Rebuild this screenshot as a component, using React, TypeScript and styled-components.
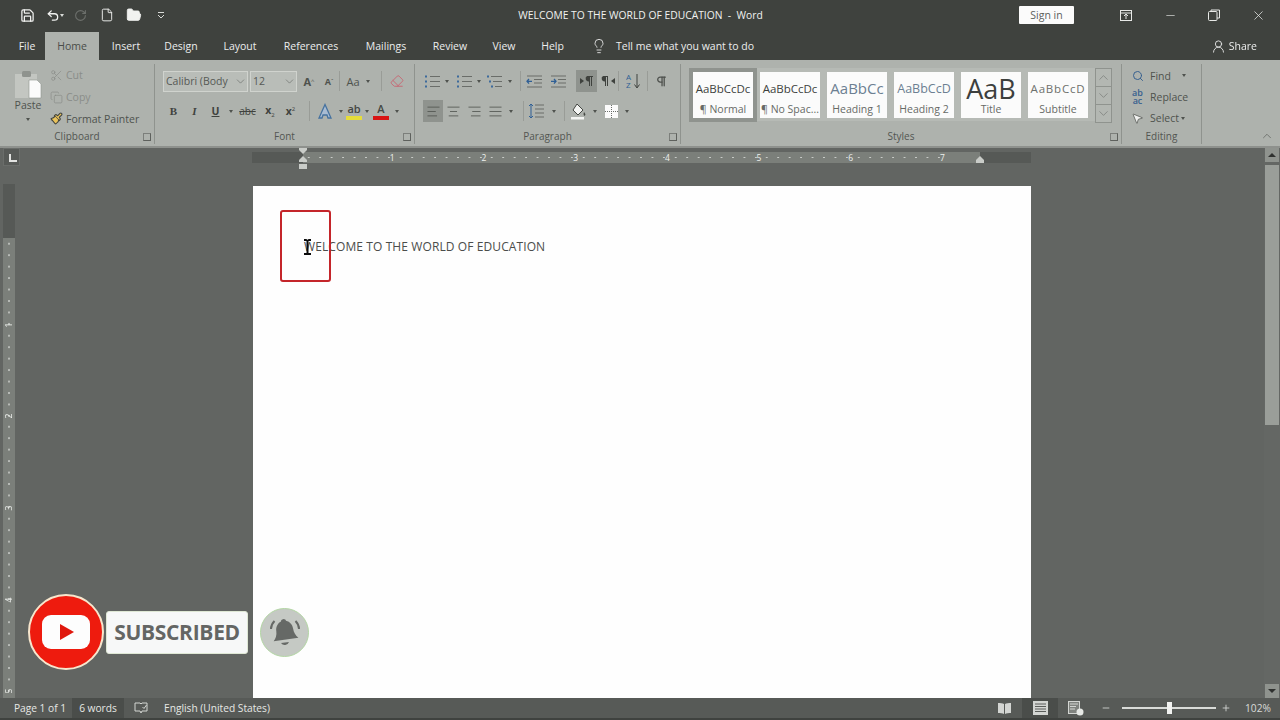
import React from "react";
import styled, { createGlobalStyle } from "styled-components";
import {
  Save,
  Undo2,
  RotateCw,
  File,
  FolderOpen,
  Lightbulb,
  UserRound,
  Scissors,
  Copy,
  Paintbrush,
  AlignLeft,
  AlignCenter,
  AlignRight,
  AlignJustify,
  ChevronDown,
  ChevronUp,
  Minus,
  Plus,
  X,
  Search,
  MousePointer2,
  Pilcrow,
  Eraser,
} from "lucide-react";

const GlobalStyle = createGlobalStyle`
  html, body {
    margin: 0;
    padding: 0;
    background: #626562;
    overflow: hidden;
  }
  * {
    box-sizing: border-box;
  }
`;

const Page = styled.div`
  width: 1280px;
  height: 720px;
  display: flex;
  flex-direction: column;
  position: relative;
  overflow: hidden;
  font-family: "Open Sans", "Noto Sans", sans-serif;
  font-size: 10.5px;
  filter: blur(0.35px);
`;

/* title bar */
const TitleBar = styled.div`
  height: 30px;
  flex: none;
  display: grid;
  grid-template-columns: 1fr 420px 1fr;
  align-items: center;
  background: #3f423e;
  color: #f1f2f0;
`;

const Qat = styled.div`
  display: flex;
  align-items: center;
  padding-left: 20px;
`;

const QatSlot = styled.span<{ $w: number; $dim?: boolean }>`
  width: ${(p) => p.$w}px;
  height: 16px;
  display: flex;
  align-items: center;
  color: ${(p) => (p.$dim ? "#6d706c" : "#f1f2f0")};
`;

const DocTitle = styled.div`
  text-align: center;
  font-size: 10.3px;
  white-space: pre;
  padding-left: 1px;
`;

const WinControls = styled.div`
  display: flex;
  align-items: center;
  justify-content: flex-end;
`;

const SignIn = styled.div`
  width: 55px;
  height: 18px;
  margin-right: 30px;
  background: #fbfbfb;
  color: #5d605c;
  font-size: 10.5px;
  line-height: 18px;
  text-align: center;
  border-radius: 1px;
`;

const WinButton = styled.div<{ $w: number }>`
  width: ${(p) => p.$w}px;
  height: 16px;
  display: flex;
  justify-content: center;
  align-items: center;
  color: #e8e9e7;
`;

/* tabs */
const TabBar = styled.div`
  height: 30px;
  flex: none;
  display: flex;
  align-items: flex-end;
  background: #3f423e;
  padding-left: 9px;
`;

const Tab = styled.div<{ $active?: boolean; $w: number }>`
  width: ${(p) => p.$w}px;
  height: 28px;
  line-height: 28px;
  text-align: center;
  font-size: 10.5px;
  color: ${(p) => (p.$active ? "#4a4d49" : "#eceded")};
  background: ${(p) => (p.$active ? "#aeb2ad" : "transparent")};
`;

const TellMe = styled.div`
  display: flex;
  align-items: center;
  gap: 9px;
  height: 28px;
  margin-left: 15px;
  color: #eceded;
  font-size: 10.5px;
`;

const Share = styled.div`
  margin-left: auto;
  margin-right: 23px;
  height: 28px;
  display: flex;
  align-items: center;
  gap: 3px;
  color: #eceded;
  font-size: 10.5px;
`;

/* ribbon */
const Ribbon = styled.div`
  height: 88px;
  flex: none;
  display: flex;
  background: #aeb2ad;
  color: #4f524e;
  position: relative;
  border-bottom: 2px solid #8e918d;
`;

const Group = styled.div<{ $w: number }>`
  width: ${(p) => p.$w}px;
  flex: none;
  height: 80px;
  margin-top: 4px;
  border-right: 1px solid #8f938e;
  position: relative;
  display: flex;
  flex-direction: column;
`;

const GroupBody = styled.div`
  flex: 1;
  min-height: 0;
`;

const GroupLabel = styled.div`
  height: 16px;
  line-height: 16px;
  text-align: center;
  font-size: 10px;
  color: #535652;
`;

const Launcher = styled.span`
  position: absolute;
  right: 3px;
  bottom: 3px;
  width: 8px;
  height: 8px;
  border: 1px solid #7c7f7b;
  border-right-color: #5e615d;
  border-bottom-color: #5e615d;
`;

const ClipboardBody = styled(GroupBody)`
  display: flex;
  padding-left: 12px;
`;

const PasteButton = styled.div`
  width: 32px;
  display: flex;
  flex-direction: column;
  align-items: center;
  font-size: 10.5px;
  color: #4f524e;
  padding-top: 5px;
  line-height: 13px;
`;

const ClipList = styled.div`
  margin-left: 6px;
  padding-top: 2px;
  display: flex;
  flex-direction: column;
  gap: 3px;
`;

const ClipItem = styled.div<{ $dim?: boolean }>`
  height: 19px;
  display: flex;
  align-items: center;
  gap: 3px;
  font-size: 10.5px;
  color: ${(p) => (p.$dim ? "#8a8d89" : "#4f524e")};
  white-space: nowrap;
`;

const ToolStack = styled(GroupBody)<{ $left: number }>`
  padding-left: ${(p) => p.$left}px;
  padding-top: 6px;
  display: flex;
  flex-direction: column;
  gap: 8px;
`;

const ToolRow = styled.div`
  height: 22px;
  display: flex;
  align-items: center;
`;

const Combo = styled.div<{ $w: number }>`
  width: ${(p) => p.$w}px;
  height: 21px;
  margin-right: 2px;
  flex: none;
  border: 1px solid #d0d3ce;
  background: #b9bdb8;
  padding-left: 2px;
  display: flex;
  align-items: center;
  justify-content: space-between;
  font-size: 10.5px;
  color: #565955;
  white-space: nowrap;
  overflow: hidden;
`;

const Tool = styled.span<{ $w: number; $active?: boolean }>`
  width: ${(p) => p.$w}px;
  height: 22px;
  flex: none;
  display: flex;
  align-items: center;
  justify-content: center;
  color: #4f524e;
  font-size: 11px;
  background: ${(p) => (p.$active ? "#8f938e" : "transparent")};
`;

const BoldGlyph = styled.b`
  font-family: "Liberation Serif", serif;
  font-size: 11px;
  color: #3f423e;
`;

const ItalicGlyph = styled.i`
  font-family: "Liberation Serif", serif;
  font-weight: bold;
  font-size: 11px;
  color: #3f423e;
`;

const UnderGlyph = styled.b`
  text-decoration: underline;
  font-size: 10.5px;
  color: #3f423e;
`;

const StrikeGlyph = styled.span`
  text-decoration: line-through;
  font-size: 10px;
  color: #3f423e;
`;

const ScriptGlyph = styled.b`
  font-size: 10.5px;
  color: #3f423e;
  sub,
  sup {
    font-size: 6px;
    font-weight: normal;
  }
`;

const Caret = styled.span`
  width: 0;
  height: 0;
  border-left: 2.5px solid transparent;
  border-right: 2.5px solid transparent;
  border-top: 3px solid #4f524e;
`;

const Divider = styled.span`
  width: 1px;
  height: 20px;
  flex: none;
  background: #999c97;
`;

const ColorGlyph = styled.span<{ $bar: string }>`
  display: block;
  width: 16px;
  height: 17px;
  line-height: 12px;
  text-align: center;
  font-size: 11px;
  font-weight: 600;
  color: #444743;
  border-bottom: 4px solid ${(p) => p.$bar};
`;

/* styles gallery */
const StylesBody = styled(GroupBody)`
  padding: 4px 0 0 9px;
  display: flex;
`;

const Gallery = styled.div`
  height: 53px;
  width: 405px;
  background: #b6bab5;
  padding: 0 0 0 3px;
  display: flex;
  align-items: center;
  gap: 7px;
`;

const StyleCard = styled.div<{ $selected?: boolean }>`
  width: 60px;
  height: 46px;
  flex: none;
  background: #fbfbfb;
  display: flex;
  flex-direction: column;
  align-items: center;
  overflow: hidden;
  outline: ${(p) => (p.$selected ? "4px solid #8f938e" : "none")};
  padding: 3px 1px 0;
`;

const Sample = styled.div<{ $size: number; $color: string; $spacing?: number; $font?: string }>`
  height: 27px;
  line-height: 27px;
  width: 100%;
  overflow: hidden;
  white-space: nowrap;
  text-align: center;
  font-size: ${(p) => p.$size}px;
  color: ${(p) => p.$color};
  letter-spacing: ${(p) => p.$spacing ?? 0}px;
`;

const StyleName = styled.div`
  font-size: 10.5px;
  line-height: 14px;
  color: #676a66;
  white-space: nowrap;
`;

const GalleryScroll = styled.div`
  width: 17px;
  height: 55px;
  display: flex;
  flex-direction: column;
  background: #b3b7b2;
  border: 1px solid #8f938e;
  color: #6f726e;
`;

const ScrollStep = styled.div`
  flex: 1;
  display: flex;
  align-items: center;
  justify-content: center;
  border-bottom: 1px solid #8f938e;
  &:last-child {
    border-bottom: none;
  }
`;

const EditList = styled(GroupBody)`
  padding: 2px 0 0 8px;
  display: flex;
  flex-direction: column;
  gap: 2px;
`;

const EditItem = styled.div`
  height: 20px;
  display: flex;
  align-items: center;
  gap: 5px;
  font-size: 10.5px;
  color: #4f524e;
  white-space: nowrap;
`;

const EditIcon = styled.span`
  width: 15px;
  display: flex;
  justify-content: center;
`;

const ReplaceGlyph = styled.span`
  font-size: 9px;
  line-height: 8px;
  font-weight: 600;
  color: #37608f;
  text-align: center;
`;

const CollapseRibbon = styled.span`
  position: absolute;
  right: 6px;
  bottom: 3px;
  display: flex;
  color: #5a5d59;
`;

/* work area */
const Workspace = styled.div`
  flex: 1;
  min-height: 0;
  display: flex;
  background: #626562;
`;

const CenterColumn = styled.div`
  flex: 1;
  min-width: 0;
  display: flex;
  flex-direction: column;
`;

const RulerRow = styled.div`
  height: 20px;
  flex: none;
  display: flex;
  align-items: flex-start;
  padding: 0 0 0 3px;
`;

const TabStop = styled.div`
  width: 17px;
  height: 18px;
  background: #575a57;
  border: 1px solid #6a6d6a;
  margin-right: 232px;
  color: #e3e4e2;
  position: relative;
  &::after {
    content: "";
    position: absolute;
    left: 5px;
    top: 5px;
    width: 6px;
    height: 6px;
    border-left: 2px solid #e3e4e2;
    border-bottom: 2px solid #e3e4e2;
  }
`;

const HRuler = styled.div`
  width: 779px;
  height: 11px;
  margin-top: 4px;
  display: flex;
  background: #565956;
  position: relative;
`;

const RulerMargin = styled.div<{ $w: number }>`
  width: ${(p) => p.$w}px;
  flex: none;
`;

const RulerMain = styled.div`
  width: 677px;
  flex: none;
  background: #7b7f7a;
  display: flex;
`;

const RulerInch = styled.span`
  width: 91.7px;
  flex: none;
  text-align: right;
  font-size: 8.5px;
  line-height: 11px;
  color: #eef0ed;
  background: radial-gradient(circle, #c9ccc8 0.6px, transparent 1px) 0 0 / 11.46px 11px;
`;

const IndentMark = styled.svg`
  position: absolute;
  left: 46px;
  top: -4px;
`;

const RightMark = styled.svg`
  position: absolute;
  left: 724px;
  top: 4px;
`;

const DocRow = styled.div`
  flex: 1;
  min-height: 0;
  display: flex;
  padding-left: 3px;
`;

const VRuler = styled.div`
  width: 12px;
  margin-top: 16px;
  flex: none;
  background: #7b7f7a;
  margin-right: 238px;
  display: flex;
  flex-direction: column;
  align-items: center;
  overflow: hidden;
`;

const VRulerTop = styled.div`
  height: 54px;
  width: 100%;
  flex: none;
  background: #565956;
`;

const VInch = styled.div`
  height: 91.7px;
  width: 100%;
  flex: none;
  display: flex;
  align-items: flex-end;
  justify-content: center;
  color: #eef0ed;
  font-size: 8.5px;
  line-height: 10px;
  background: radial-gradient(circle, #c9ccc8 0.6px, transparent 1px) 0 0 / 12px 11.46px;
  span {
    display: block;
    transform: rotate(-90deg);
  }
`;

const Sheet = styled.div`
  width: 778px;
  margin-top: 18px;
  background: #fefefe;
  position: relative;
  padding: 52px 0 0 51px;
  flex: none;
`;

const SheetText = styled.div`
  font-size: 12px;
  line-height: 18px;
  color: #4b4d4b;
  letter-spacing: 0.1px;
  white-space: nowrap;
`;

const Highlight = styled.div`
  position: absolute;
  left: 27px;
  top: 24px;
  width: 51px;
  height: 72px;
  border: 2px solid #c4252a;
  border-radius: 3px;
`;

const IBeam = styled.svg`
  position: absolute;
  left: 50px;
  top: 53px;
`;

const VScrollbar = styled.div`
  width: 16px;
  flex: none;
  margin-right: 0;
  display: flex;
  flex-direction: column;
  align-items: center;
  background: #646764;
`;

const ScrollArrow = styled.div<{ $light?: boolean }>`
  width: 14px;
  height: 14px;
  flex: none;
  display: flex;
  justify-content: center;
  align-items: center;
  background: ${(p) => (p.$light ? "#8f938e" : "transparent")};
  color: #d9dbd8;
`;

const UpTriangle = styled.span`
  border-left: 4px solid transparent;
  border-right: 4px solid transparent;
  border-bottom: 4px solid #2f312f;
`;

const DownTriangle = styled.span`
  border-left: 4px solid transparent;
  border-right: 4px solid transparent;
  border-top: 4px solid #2f312f;
`;

const ScrollThumb = styled.div`
  width: 14px;
  height: 260px;
  margin-top: 3px;
  background: #9a9e99;
  flex: none;
`;

const ScrollFill = styled.div`
  flex: 1;
`;

/* status bar */
const StatusBar = styled.div`
  height: 22px;
  flex: none;
  display: flex;
  align-items: center;
  background: #575a57;
  border-bottom: 2px solid #3f423f;
  color: #e6e8e5;
  font-size: 10.2px;
  padding-left: 8px;
`;

const StatusItem = styled.span<{ $active?: boolean; $w?: number }>`
  height: 20px;
  line-height: 20px;
  white-space: nowrap;
  text-align: center;
  width: ${(p) => (p.$w ? `${p.$w}px` : "auto")};
  background: ${(p) => (p.$active ? "#4a4d4a" : "transparent")};
  display: flex;
  align-items: center;
  justify-content: center;
`;

const StatusRight = styled.div`
  margin-left: auto;
  display: flex;
  align-items: center;
  color: #d9dbd8;
`;

const ZoomTrack = styled.div`
  width: 94px;
  height: 2px;
  margin: 0 4px;
  background: #d9dbd8;
  position: relative;
`;

const ZoomThumb = styled.span`
  position: absolute;
  left: 45px;
  top: -5px;
  width: 5px;
  height: 12px;
  background: #f1f2f0;
`;

const ZoomPercent = styled.span`
  width: 44px;
  margin-left: 4px;
  text-align: center;
`;

/* channel overlay */
const SubscribeBadge = styled.div`
  position: absolute;
  left: 28px;
  top: 594px;
  display: flex;
  align-items: center;
`;

const YoutubeDisc = styled.div`
  width: 76px;
  height: 76px;
  border-radius: 50%;
  background: #ee1b0e;
  border: 2px solid #f7e6cd;
  display: flex;
  align-items: center;
  justify-content: center;
`;

const SubscribedPill = styled.div`
  width: 142px;
  height: 43px;
  margin-left: 2px;
  background: #f7f8f8;
  border-radius: 3px;
  border: 1px solid #dfe8d5;
  font-size: 21px;
  line-height: 41px;
  font-weight: 700;
  color: #646664;
  text-align: center;
  letter-spacing: -0.3px;
`;

const BellDisc = styled.div`
  width: 49px;
  height: 49px;
  margin-left: 12px;
  border-radius: 50%;
  background: #c5c9c4;
  border: 1px solid #b3d6a4;
  display: flex;
  align-items: center;
  justify-content: center;
`;

const ink = "#4f524e";

const ListIcon = ({ kind }: { kind: "bullet" | "number" | "multi" }) => (
  <svg width="17" height="15" viewBox="0 0 17 15" fill="none" stroke="#6a6d69" strokeWidth="1">
    {[2.5, 7.5, 12.5].map((y, i) => (
      <g key={y}>
        <rect x={kind === "multi" ? 1 + i * 2 : 1} y={y - 1} width="2" height="2" fill="#3d6a9c" stroke="none" />
        <line x1={kind === "multi" ? 5 + i * 2 : 6} x2="16" y1={y} y2={y} />
      </g>
    ))}
  </svg>
);

const IndentIcon = ({ flip }: { flip?: boolean }) => (
  <svg width="17" height="13" viewBox="0 0 17 13" fill="none" stroke="#6a6d69">
    <path d="M1 1h15M8 4.5h8M8 8h8M1 12h15" />
    <path d={flip ? "M6 6.3H1M4 4l2 2.3L4 8.6" : "M1 6.3h5M3 4L1 6.3l2 2.3"} stroke="#2f5f95" strokeWidth="1.3" />
  </svg>
);

const DirectionIcon = ({ rtl }: { rtl?: boolean }) => (
  <svg width="16" height="12" viewBox="0 0 16 12" fill="#3f423e">
    {rtl ? (
      <>
        <path d="M3 1h5v10H7V2H6v9H5V6.5A3 3 0 0 1 3 1z" />
        <path d="M15 3v6l-4-3z" />
      </>
    ) : (
      <>
        <path d="M8 1h6v1h-1v9h-1V2h-1v9h-1V6.5A3 3 0 0 1 8 1z" />
        <path d="M1 3v6l4-3z" />
      </>
    )}
  </svg>
);

const SortIcon = () => (
  <svg width="15" height="18" viewBox="0 0 15 18" fill="none">
    <text x="0" y="8" fontSize="8" fill="#2f5f95" fontFamily="Open Sans">A</text>
    <text x="0" y="16" fontSize="8" fill="#2f5f95" fontFamily="Open Sans">Z</text>
    <path d="M11 2v13M8.5 12.5L11 16l2.5-3.5" stroke="#3f423e" />
  </svg>
);

const LineSpacingIcon = () => (
  <svg width="17" height="16" viewBox="0 0 17 16" fill="none" stroke="#6a6d69">
    <path d="M7 2h9M7 6h9M7 10h9M7 14h9" />
    <path d="M3 1v14M1 3l2-2 2 2M1 13l2 2 2-2" stroke="#2f5f95" />
  </svg>
);

const BorderIcon = () => (
  <svg width="15" height="15" viewBox="0 0 15 15">
    <rect x="1" y="1" width="13" height="13" fill="#fbfbfb" />
    <path d="M7.5 1v13M1 7.5h13" stroke="#6a6d69" strokeDasharray="1 1" />
  </svg>
);

const ShadingIcon = () => (
  <svg width="17" height="17" viewBox="0 0 17 17">
    <path d="M7 1l6 6-5 5-5-5z" fill="#f4f5f3" stroke="#444743" />
    <path d="M14 9c1 1.5 2 2.5 1 3.5s-2-1-1-3.5z" fill="#444743" />
    <rect x="1" y="14" width="13" height="2.5" fill="#f4f5f3" />
  </svg>
);

const TextEffectIcon = () => (
  <svg width="16" height="17" viewBox="0 0 16 17" fill="none">
    <path d="M8 1.5L2 15h3l1-3h4l1 3h3z" fill="#a9bcd2" stroke="#46729f" strokeWidth="1.3" />
  </svg>
);

const PasteIcon = () => (
  <svg width="28" height="30" viewBox="0 0 28 30">
    <rect x="1" y="5" width="22" height="24" fill="#c3c6c1" />
    <rect x="8" y="2" width="9" height="6" rx="1.5" fill="#8f938e" />
    <path d="M15 11h8l4 4v14H15z" fill="#fbfbfb" stroke="#8f938e" strokeWidth="0.6" />
  </svg>
);

const BookIcon = () => (
  <svg width="15" height="13" viewBox="0 0 15 13" fill="#d3d5d2">
    <path d="M1 1c2 0 5 0 6 1v10c-1-1-4-1-6-1zM14 1c-2 0-5 0-6 1v10c1-1 4-1 6-1z" />
  </svg>
);

const PrintIcon = () => (
  <svg width="15" height="14" viewBox="0 0 15 14">
    <rect width="15" height="14" fill="#d3d5d2" />
    <path d="M2 3h11M2 5.5h11M2 8h11M2 10.5h11" stroke="#5a5d5a" />
  </svg>
);

const WebIcon = () => (
  <svg width="16" height="15" viewBox="0 0 16 15">
    <rect x="0.5" y="0.5" width="11" height="12" fill="#80837f" stroke="#d3d5d2" />
    <path d="M2 3h8M2 5.5h6M2 8h5" stroke="#d3d5d2" />
    <circle cx="12" cy="11" r="3.5" fill="#e6e8e5" />
  </svg>
);

const ProofIcon = () => (
  <svg width="14" height="13" viewBox="0 0 14 13" fill="none" stroke="#d3d5d2">
    <path d="M1 1h5l1 1 1-1h5v8H8l-1 2-1-2H1z" />
    <path d="M8.5 5l1.5 1.5L12.5 3" />
  </svg>
);

const SnapIcon = () => (
  <svg width="12" height="11" viewBox="0 0 12 11" fill="none" stroke="#e8e9e7">
    <rect x="0.5" y="0.5" width="11" height="10" />
    <path d="M0.5 3h11" />
    <path d="M6 9V4.5M4 6l2-2 2 2" />
  </svg>
);

const RestoreIcon = () => (
  <svg width="12" height="12" viewBox="0 0 12 12" fill="none" stroke="#e8e9e7">
    <rect x="0.5" y="2.5" width="8.5" height="9" rx="1" />
    <path d="M3 2.5V1h8.5v8H9" />
  </svg>
);

const QatMoreIcon = () => (
  <svg width="10" height="9" viewBox="0 0 10 9" fill="none" stroke="#d9dbd8">
    <path d="M2 1.5h6M2 4l3 3 3-3" />
  </svg>
);

const BellIcon = () => (
  <svg width="36" height="36" viewBox="0 0 36 36" fill="#666966">
    <path d="M18 5c1.500 0 2.500 1 2.500 2 4 1.500 6 5 6 9 0 4 1.500 7 4 9.500L5.500 25.500C8 23 9.500 20 9.500 16c0-4 2-7.500 6-9C15.500 6 16.500 5 18 5z" transform="rotate(-8 18 18)" />
    <path d="M14 29a4.500 4.500 0 0 0 8 -1z" />
    <path d="M4 15c0-3 1.500-6 3.500-8M32 15c0-3-1.500-6-3.500-8" fill="none" stroke="#666966" strokeWidth="2" />
  </svg>
);

const galleryItems = [
  { name: "¶ Normal", size: 11.5, color: "#3d3f3d", selected: true },
  { name: "¶ No Spac...", size: 11.5, color: "#3d3f3d" },
  { name: "Heading 1", size: 15, color: "#6c7f92" },
  { name: "Heading 2", size: 12.5, color: "#6c7f92" },
  { name: "Title", size: 27, color: "#3d3f3d" },
  { name: "Subtitle", size: 11.5, color: "#6d706c", spacing: 0.8 },
];

const sampleText = (name: string) =>
  name === "Title" ? "AaB" : name === "Heading 1" ? "AaBbCc" : name === "¶ Normal" || name === "¶ No Spac..." ? "AaBbCcDc" : "AaBbCcD";

const tabs: [string, number][] = [
  ["File", 36],
  ["Home", 54],
  ["Insert", 54],
  ["Design", 56],
  ["Layout", 62],
  ["References", 80],
  ["Mailings", 70],
  ["Review", 58],
  ["View", 50],
  ["Help", 47],
];

export default function App() {
  return (
    <Page>
      <GlobalStyle />
      <TitleBar>
        <Qat>
          <QatSlot $w={26}><Save size={15} strokeWidth={2} /></QatSlot>
          <QatSlot $w={14}><Undo2 size={15} strokeWidth={2.2} /></QatSlot>
          <QatSlot $w={14}><Caret style={{ borderTopColor: "#d9dbd8" }} /></QatSlot>
          <QatSlot $w={26} $dim><RotateCw size={13} strokeWidth={2} /></QatSlot>
          <QatSlot $w={26}><File size={14} strokeWidth={1.6} /></QatSlot>
          <QatSlot $w={30}><FolderOpen size={16} fill="#f1f2f0" strokeWidth={1.4} /></QatSlot>
          <QatSlot $w={12}><QatMoreIcon /></QatSlot>
        </Qat>
        <DocTitle>WELCOME TO THE WORLD OF EDUCATION  -  Word</DocTitle>
        <WinControls>
          <SignIn>Sign in</SignIn>
          <WinButton $w={44}><SnapIcon /></WinButton>
          <WinButton $w={44}><Minus size={13} strokeWidth={1.2} /></WinButton>
          <WinButton $w={44}><RestoreIcon /></WinButton>
          <WinButton $w={44}><X size={15} strokeWidth={1.2} /></WinButton>
        </WinControls>
      </TitleBar>

      <TabBar>
        {tabs.map(([label, w]) => (
          <Tab key={label} $w={w} $active={label === "Home"}>{label}</Tab>
        ))}
        <TellMe>
          <Lightbulb size={16} strokeWidth={1.3} />
          Tell me what you want to do
        </TellMe>
        <Share>
          <UserRound size={15} strokeWidth={1.4} />
          Share
        </Share>
      </TabBar>

      <Ribbon>
        <Group $w={155}>
          <ClipboardBody>
            <PasteButton>
              <PasteIcon />
              <span>Paste</span>
              <Caret style={{ marginTop: 6 }} />
            </PasteButton>
            <ClipList>
              <ClipItem $dim><Scissors size={13} strokeWidth={1.3} />Cut</ClipItem>
              <ClipItem $dim><Copy size={13} strokeWidth={1.3} />Copy</ClipItem>
              <ClipItem><Paintbrush size={13} fill="#e9c25a" color="#3f423e" />Format Painter</ClipItem>
            </ClipList>
          </ClipboardBody>
          <GroupLabel>Clipboard</GroupLabel>
          <Launcher />
        </Group>

        <Group $w={260}>
          <ToolStack $left={8}>
            <ToolRow>
              <Combo $w={85}>Calibri (Body<ChevronDown size={13} strokeWidth={1} /></Combo>
              <Combo $w={47}>12<ChevronDown size={13} strokeWidth={1} /></Combo>
              <Tool $w={20}><b>A</b><sup style={{ fontSize: 6 }}>^</sup></Tool>
              <Tool $w={20}><b style={{ fontSize: 9 }}>A</b><sup style={{ fontSize: 6 }}>ˇ</sup></Tool>
              <Divider />
              <Tool $w={26}>Aa</Tool>
              <Caret />
              <Tool $w={11} />
              <Divider />
              <Tool $w={30}><Eraser size={14} color="#c8616f" strokeWidth={1.5} /></Tool>
            </ToolRow>
            <ToolRow>
              <Tool $w={21}><BoldGlyph>B</BoldGlyph></Tool>
              <Tool $w={21}><ItalicGlyph>I</ItalicGlyph></Tool>
              <Tool $w={21}><UnderGlyph>U</UnderGlyph></Tool>
              <Tool $w={9}><Caret /></Tool>
              <Tool $w={25}><StrikeGlyph>abc</StrikeGlyph></Tool>
              <Tool $w={20}><ScriptGlyph>x<sub>2</sub></ScriptGlyph></Tool>
              <Tool $w={21}><ScriptGlyph>x<sup>2</sup></ScriptGlyph></Tool>
              <Tool $w={8} />
              <Divider />
              <Tool $w={29}><TextEffectIcon /></Tool>
              <Caret />
              <Tool $w={22}><ColorGlyph $bar="#e6dd3a">ab</ColorGlyph></Tool>
              <Caret />
              <Tool $w={24}><ColorGlyph $bar="#d81414">A</ColorGlyph></Tool>
              <Tool $w={8}><Caret /></Tool>
            </ToolRow>
          </ToolStack>
          <GroupLabel>Font</GroupLabel>
          <Launcher />
        </Group>

        <Group $w={266}>
          <ToolStack $left={8}>
            <ToolRow>
              <Tool $w={18}><ListIcon kind="bullet" /></Tool>
              <Tool $w={12}><Caret /></Tool>
              <Tool $w={22}><ListIcon kind="number" /></Tool>
              <Tool $w={8}><Caret /></Tool>
              <Tool $w={22}><ListIcon kind="multi" /></Tool>
              <Tool $w={10}><Caret /></Tool>
              <Tool $w={5} />
              <Divider />
              <Tool $w={27}><IndentIcon /></Tool>
              <Tool $w={20}><IndentIcon flip /></Tool>
              <Tool $w={8} />
              <Tool $w={21} $active><DirectionIcon /></Tool>
              <Tool $w={21}><DirectionIcon rtl /></Tool>
              <Divider />
              <Tool $w={28}><SortIcon /></Tool>
              <Divider />
              <Tool $w={26}><Pilcrow size={13} color={ink} strokeWidth={2.4} /></Tool>
            </ToolRow>
            <ToolRow>
              <Tool $w={20} $active><AlignLeft size={15} strokeWidth={1.3} /></Tool>
              <Tool $w={21}><AlignCenter size={15} strokeWidth={1.3} /></Tool>
              <Tool $w={21}><AlignRight size={15} strokeWidth={1.3} /></Tool>
              <Tool $w={20}><AlignJustify size={15} strokeWidth={1.3} /></Tool>
              <Tool $w={12}><Caret /></Tool>
              <Tool $w={6} />
              <Divider />
              <Tool $w={25}><LineSpacingIcon /></Tool>
              <Tool $w={9}><Caret /></Tool>
              <Tool $w={6} />
              <Divider />
              <Tool $w={26}><ShadingIcon /></Tool>
              <Tool $w={8}><Caret /></Tool>
              <Tool $w={24}><BorderIcon /></Tool>
              <Tool $w={8}><Caret /></Tool>
            </ToolRow>
          </ToolStack>
          <GroupLabel>Paragraph</GroupLabel>
          <Launcher />
        </Group>

        <Group $w={441}>
          <StylesBody>
            <Gallery>
              {galleryItems.map((item) => (
                <StyleCard key={item.name} $selected={item.selected}>
                  <Sample $size={item.size} $color={item.color} $spacing={item.spacing}>
                    {sampleText(item.name)}
                  </Sample>
                  <StyleName>{item.name}</StyleName>
                </StyleCard>
              ))}
            </Gallery>
            <GalleryScroll>
              <ScrollStep><ChevronUp size={15} strokeWidth={1} /></ScrollStep>
              <ScrollStep><ChevronDown size={15} strokeWidth={1} /></ScrollStep>
              <ScrollStep><ChevronDown size={15} strokeWidth={1} /></ScrollStep>
            </GalleryScroll>
          </StylesBody>
          <GroupLabel>Styles</GroupLabel>
          <Launcher />
        </Group>

        <Group $w={80}>
          <EditList>
            <EditItem>
              <EditIcon><Search size={12} color="#37608f" strokeWidth={2} /></EditIcon>
              Find <Caret style={{ marginLeft: 6 }} />
            </EditItem>
            <EditItem>
              <EditIcon><ReplaceGlyph>ab<br />ac</ReplaceGlyph></EditIcon>
              Replace
            </EditItem>
            <EditItem>
              <EditIcon><MousePointer2 size={13} color="#3f423e" fill="#f1f2f0" strokeWidth={1.2} /></EditIcon>
              Select <Caret style={{ marginLeft: -3 }} />
            </EditItem>
          </EditList>
          <GroupLabel>Editing</GroupLabel>
        </Group>
        <CollapseRibbon><ChevronUp size={14} strokeWidth={1.2} /></CollapseRibbon>
      </Ribbon>

      <Workspace>
        <CenterColumn>
          <RulerRow>
            <TabStop />
            <HRuler>
              <RulerMargin $w={51} />
              <RulerMain>
                {[1, 2, 3, 4, 5, 6, 7].map((n) => (
                  <RulerInch key={n}>{n}</RulerInch>
                ))}
              </RulerMain>
              <RulerMargin $w={51} />
              <IndentMark width="10" height="22" viewBox="0 0 10 22">
                <path d="M1 0h8v2L5 6 1 2z" fill="#c9ccc8" />
                <path d="M5 8l4 4v2H1v-2z" fill="#c9ccc8" />
                <rect x="1" y="16" width="8" height="5" fill="#c9ccc8" />
              </IndentMark>
              <RightMark width="8" height="7" viewBox="0 0 8 7">
                <path d="M4 0l4 4v3H0V4z" fill="#c9ccc8" />
              </RightMark>
            </HRuler>
          </RulerRow>
          <DocRow>
            <VRuler>
              <VRulerTop />
              {[1, 2, 3, 4, 5].map((n) => (
                <VInch key={n}><span>{n}</span></VInch>
              ))}
            </VRuler>
            <Sheet>
              <SheetText>WELCOME TO THE WORLD OF EDUCATION</SheetText>
              <Highlight />
              <IBeam width="9" height="16" viewBox="0 0 9 16" fill="none" stroke="#0c0c0c" strokeWidth="2">
                <path d="M1 1h2l1.500 1L6 1h2M4.500 2v12M1 15h2l1.500-1L6 15h2" />
              </IBeam>
            </Sheet>
          </DocRow>
        </CenterColumn>
        <VScrollbar>
          <ScrollArrow $light><UpTriangle /></ScrollArrow>
          <ScrollThumb />
          <ScrollFill />
          <ScrollArrow $light><DownTriangle /></ScrollArrow>
        </VScrollbar>
      </Workspace>

      <StatusBar>
        <StatusItem $w={64}>Page 1 of 1</StatusItem>
        <StatusItem $w={52} $active>6 words</StatusItem>
        <StatusItem $w={34}><ProofIcon /></StatusItem>
        <StatusItem style={{ marginLeft: 6 }}>English (United States)</StatusItem>
        <StatusRight>
          <StatusItem $w={36}><BookIcon /></StatusItem>
          <StatusItem $w={36} $active><PrintIcon /></StatusItem>
          <StatusItem $w={36}><WebIcon /></StatusItem>
          <StatusItem $w={24}><Minus size={10} /></StatusItem>
          <ZoomTrack><ZoomThumb /></ZoomTrack>
          <StatusItem $w={12}><Plus size={10} /></StatusItem>
          <ZoomPercent>102%</ZoomPercent>
        </StatusRight>
      </StatusBar>

      <SubscribeBadge>
        <YoutubeDisc>
          <svg width="50" height="36" viewBox="0 0 50 36">
            <rect x="1" y="1" width="48" height="34" rx="9" fill="#fdfdfd" />
            <path d="M19 10l14 8-14 8z" fill="#e0170d" />
          </svg>
        </YoutubeDisc>
        <SubscribedPill>SUBSCRIBED</SubscribedPill>
        <BellDisc><BellIcon /></BellDisc>
      </SubscribeBadge>
    </Page>
  );
}
